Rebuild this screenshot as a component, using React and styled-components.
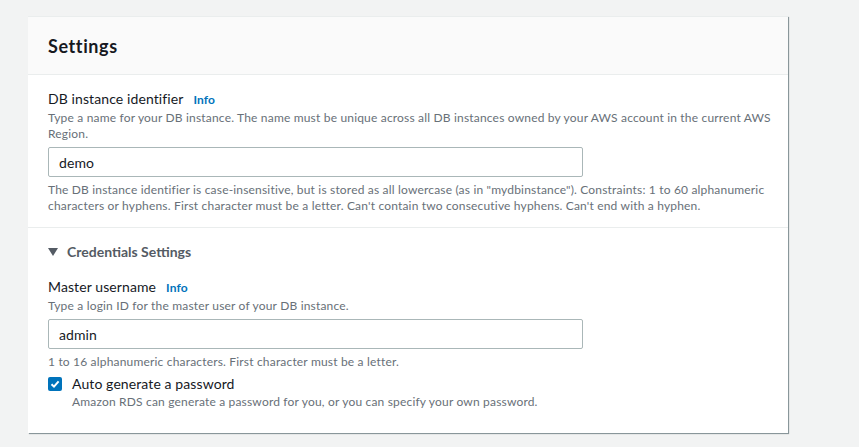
import React from 'react'
import styled, { createGlobalStyle } from 'styled-components'

const GlobalStyle = createGlobalStyle`
  body {
    margin: 0;
    background: #f2f3f3;
    font-family: Lato, "Liberation Sans", sans-serif;
    color: #16191f;
  }
`

const Page = styled.div`
  padding: 16px 0 14px 28px;
`

const Card = styled.section`
  width: 760px;
  box-sizing: border-box;
  background: #fff;
  border-top: 1px solid #eaeded;
  box-shadow: 1px 1px 1px 0 rgba(0, 28, 36, 0.3), 1px 1px 0 0 #c4cccd;
`

const Header = styled.header`
  background: #fafafa;
  border-bottom: 1px solid #eaeded;
  padding: 18px 20px 17px;
`

const Title = styled.h2`
  margin: 0;
  font-size: 18px;
  line-height: 22px;
  letter-spacing: 0.6px;
  font-weight: 700;
`

const Section = styled.div`
  padding: ${props => props.pad || '14px 20px 13px'};
  border-top: ${props => (props.divided ? '1px solid #eaeded' : 'none')};
`

const Label = styled.div`
  font-size: 14px;
  line-height: 20px;
  letter-spacing: 0.1px;
  display: flex;
  align-items: baseline;
`

const Info = styled.a`
  font-size: 12px;
  font-weight: 700;
  color: #0073bb;
  margin-left: 10px;
  text-decoration: none;
`

const Hint = styled.div`
  font-size: 12px;
  line-height: 16px;
  letter-spacing: 0.18px;
  color: #687078;
  white-space: nowrap;
  margin-top: ${props => props.top || '0'};
`

const Input = styled.input`
  display: block;
  box-sizing: border-box;
  width: 535px;
  height: 30px;
  margin-top: 5px;
  padding: 0 10px;
  border: 1px solid #aab7b8;
  border-radius: 2px;
  font-family: inherit;
  font-size: 14px;
  letter-spacing: 0.1px;
  color: #16191f;
  outline: none;
`

const Toggle = styled.div`
  display: flex;
  align-items: center;
  gap: 9px;
  font-size: 14px;
  font-weight: 700;
  color: #545b64;
  line-height: 20px;
  margin-bottom: 15px;
`

const Caret = styled.span`
  width: 0;
  height: 0;
  border-left: 5px solid transparent;
  border-right: 5px solid transparent;
  border-top: 8px solid #545b64;
`

const CheckRow = styled.div`
  display: flex;
  gap: 10px;
  margin-top: 4px;
`

const Box = styled.span`
  flex: none;
  width: 14px;
  height: 14px;
  margin-top: 3px;
  border-radius: 2px;
  background: #0073bb;
  display: flex;
  align-items: center;
  justify-content: center;
`

const CheckText = styled.div`
  font-size: 14px;
  line-height: 20px;
  letter-spacing: 0.1px;
`

function Field({ label, hint, value, children }) {
  return (
    <>
      <Label>
        {label}
        <Info href="#">Info</Info>
      </Label>
      <Hint>{hint}</Hint>
      <Input defaultValue={value} />
      {children}
    </>
  )
}

export default function App() {
  return (
    <Page>
      <GlobalStyle />
      <Card>
        <Header>
          <Title>Settings</Title>
        </Header>
        <Section>
          <Field
            label="DB instance identifier"
            value="demo"
            hint={<>Type a name for your DB instance. The name must be unique across all DB instances owned by your AWS account in the current AWS<br />Region.</>}
          >
            <Hint top="5px">
              The DB instance identifier is case-insensitive, but is stored as all lowercase (as in "mydbinstance"). Constraints: 1 to 60 alphanumeric
              <br />
              characters or hyphens. First character must be a letter. Can't contain two consecutive hyphens. Can't end with a hyphen.
            </Hint>
          </Field>
        </Section>
        <Section divided pad="14px 20px 23px">
          <Toggle>
            <Caret />
            Credentials Settings
          </Toggle>
          <Field
            label="Master username"
            value="admin"
            hint="Type a login ID for the master user of your DB instance."
          >
            <Hint top="5px">1 to 16 alphanumeric characters. First character must be a letter.</Hint>
            <CheckRow>
              <Box>
                <svg width="10" height="10" viewBox="0 0 10 10">
                  <path d="M1.5 5.2 L4 7.6 L8.6 2.4" fill="none" stroke="#fff" strokeWidth="2" />
                </svg>
              </Box>
              <div>
                <CheckText>Auto generate a password</CheckText>
                <Hint>Amazon RDS can generate a password for you, or you can specify your own password.</Hint>
              </div>
            </CheckRow>
          </Field>
        </Section>
      </Card>
    </Page>
  )
}
